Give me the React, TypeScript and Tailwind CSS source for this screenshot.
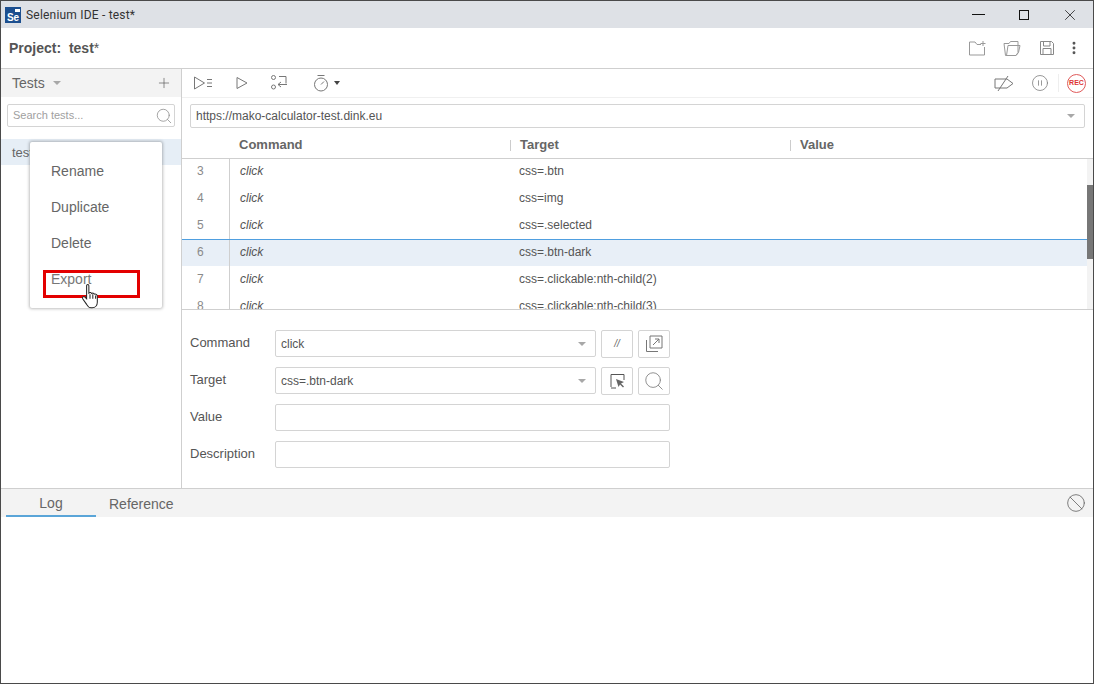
import { Search, Plus, X, EllipsisVertical, Ban, CirclePause } from 'lucide-react'

const rows = [
  { n: 3, target: 'css=.btn' },
  { n: 4, target: 'css=img' },
  { n: 5, target: 'css=.selected' },
  { n: 6, target: 'css=.btn-dark', active: true },
  { n: 7, target: 'css=.clickable:nth-child(2)' },
  { n: 8, target: 'css=.clickable:nth-child(3)' },
]

function Caret({ className = '' }: { className?: string }) {
  return <span className={`inline-block h-0 w-0 border-x-[4px] border-t-[4px] border-x-transparent border-t-[#a8a8a8] ${className}`} />
}

function Ico({ children, w = 22, h = 22, className = '' }: { children: React.ReactNode; w?: number; h?: number; className?: string }) {
  return (
    <svg width={w} height={h} viewBox={`0 0 ${w} ${h}`} fill="none" stroke="#777" strokeWidth="1" className={className}>
      {children}
    </svg>
  )
}

function Field({ label, value, caret, children }: { label: string; value?: string; caret?: boolean; children?: React.ReactNode }) {
  return (
    <div className="flex h-[27px] items-center">
      <span className="w-[85px] pb-[2px] text-[13px] text-[#555]">{label}</span>
      <div className="flex h-[27px] flex-1 items-center justify-between rounded-[2px] border border-[#d4d4d4] bg-white pl-[5px] pr-[9px] text-[12px] text-[#555]">
        <span>{value}</span>
        {caret && <Caret />}
      </div>
      {children}
    </div>
  )
}

function IconButton({ children }: { children: React.ReactNode }) {
  return (
    <div className="ml-[5px] flex h-[28px] w-[32px] items-center justify-center rounded-[2px] border border-[#d4d4d4] bg-white">
      {children}
    </div>
  )
}

export default function App() {
  return (
    <div className="relative flex h-[684px] w-[1094px] flex-col overflow-hidden border-x border-y border-[#4a4a4a] bg-white font-['Liberation_Sans',sans-serif] text-[#555]">
      <div className="flex h-[27px] shrink-0 items-center bg-[#dee1e6] pl-[4px]">
        <div className="relative flex h-[16px] w-[16px] items-end justify-center bg-[#1c4f8f] text-[10px] font-bold leading-[11px] text-white">
          Se
          <span className="absolute right-[1px] top-[2px] h-[3px] w-[5px] bg-white" />
        </div>
        <span className="ml-[5px] font-['Roboto',sans-serif] text-[12px] tracking-[0.2px] text-[#333]">Selenium IDE - test*</span>
        <div className="ml-auto flex items-center text-[#111]">
          <span className="flex w-[46px] justify-center"><span className="h-[1px] w-[13px] bg-[#111]" /></span>
          <span className="flex w-[46px] justify-center"><span className="h-[10px] w-[10px] border border-[#111]" /></span>
          <span className="flex w-[46px] justify-center"><X size={18} strokeWidth={1} /></span>
        </div>
      </div>

      <div className="flex h-[41px] shrink-0 items-center border-b border-[#cfcfcf] pl-[8px] pr-[11px]">
        <span className="text-[14px] font-bold text-[#555]">Project:&nbsp; test<span className="font-normal">*</span></span>
        <div className="ml-auto flex items-center">
          <Ico w={20} h={18}>
            <path d="M8 3H2.500v13h15V8M8 3l2 2.500h4M16 2v5M13.500 4.500h5" stroke="#999" />
          </Ico>
          <Ico w={20} h={18} className="ml-[15px]">
            <path d="M2 4.500h5l1.500-2H16v11l-2 3H3.500zM4.500 16.500L6 6.500h12l-1.500 7-2.500 3" stroke="#999" />
          </Ico>
          <Ico w={18} h={18} className="ml-[16px]">
            <path d="M2.500 2.500h11l2 2v11h-13zM5.500 2.500v4.500h6.500V2.500M5 15.500v-6h8v6" stroke="#888" />
          </Ico>
          <EllipsisVertical size={16} color="#555" strokeWidth={2.4} className="ml-[10px]" />
        </div>
      </div>

      <div className="flex h-[420px] shrink-0 border-b border-[#cfcfcf]">
        <aside className="w-[181px] shrink-0 border-r border-[#cfcfcf]">
          <div className="flex h-[28px] items-center bg-[#f3f3f3] pl-[11px] pr-[9px]">
            <span className="text-[14px] text-[#666]">Tests</span>
            <Caret className="ml-[8px]" />
            <Plus size={16} strokeWidth={1} color="#555" className="ml-auto" />
          </div>
          <div className="mt-[7px] px-[6px]">
            <div className="flex h-[23px] items-center justify-between rounded-[2px] border border-[#d4d4d4] pl-[5px] pr-[1px] text-[11px] text-[#a0a0a0]">
              Search tests...
              <Search size={18} strokeWidth={1} color="#888" />
            </div>
          </div>
          <div className="mt-[12px] flex h-[26px] items-center bg-[#e6eef6] pl-[11px] pt-[1px] text-[13px] text-[#666]">test</div>
        </aside>

        <main className="flex min-w-0 flex-1 flex-col">
          <div className="flex h-[29px] shrink-0 items-center border-b border-[#f0f0f0] pl-[11px] pr-[7px]">
            <Ico w={20} h={16}>
              <path d="M1.500 2l10 6-10 6z M14 4.500h5M14 8h5M14 11.500h5" />
            </Ico>
            <Ico w={14} h={16} className="ml-[22px]">
              <path d="M2 2.500l10 5.500-10 5.500z" />
            </Ico>
            <Ico w={18} h={18} className="ml-[21px]">
              <circle cx="3.500" cy="3.500" r="2" />
              <circle cx="3.500" cy="13" r="2" />
              <path d="M9 2.500h7v7M17 10.500H8M11 8l-3 2.500 3 2.500" />
            </Ico>
            <Ico w={16} h={18} className="ml-[25px]">
              <circle cx="8" cy="10.500" r="6.500" />
              <path d="M4.500 1.500h7M8 10.500l3-3" />
            </Ico>
            <span className="ml-[5px] inline-block h-0 w-0 border-x-[3px] border-t-[4px] border-x-transparent border-t-[#444]" />
            <div className="ml-auto flex items-center">
              <Ico w={20} h={18}>
                <path d="M1 5h12l6 4.500-6 4.500H1zM4 17L14 2" />
              </Ico>
              <CirclePause size={18} strokeWidth={1} color="#777" className="ml-[17px]" />
              <div className="ml-[9px] h-[18px] border-l border-[#eee]" />
              <div className="ml-[8px] flex h-[19px] w-[19px] items-center justify-center rounded-full border border-[#e05a5a] text-[7px] font-bold text-[#d33]">REC</div>
            </div>
          </div>

          <div className="shrink-0 px-[8px] pt-[6px]">
            <div className="flex h-[24px] items-center justify-between rounded-[2px] border border-[#d4d4d4] pb-[1px] pl-[5px] pr-[9px] text-[12px] text-[#555]">
              https://mako-calculator-test.dink.eu
              <Caret />
            </div>
          </div>

          <div className="flex h-[31px] shrink-0 items-center border-b border-[#cfcfcf] pt-[4px] text-[13px] font-bold text-[#666] [&>span]:font-semibold">
            <span className="ml-[57px] w-[271px]">Command</span>
            <span className="h-[11px] border-l border-[#ccc]" />
            <span className="ml-[9px] w-[270px]">Target</span>
            <span className="h-[11px] border-l border-[#ccc]" />
            <span className="ml-[9px]">Value</span>
          </div>

          <div className="relative h-[151px] shrink-0 overflow-hidden border-b border-[#cfcfcf]">
            <div className="-mt-[1px]">
              {rows.map((r) => (
                <div
                  key={r.n}
                  className={`flex h-[27px] items-center text-[12px] text-[#555] ${r.active ? 'border-t border-[#4f9fe0] bg-[#e8eff7] [&>span]:pb-[2px]' : '[&>span]:pb-[1px]'}`}
                >
                  <span className="flex h-full w-[48px] items-center border-r border-[#cfcfcf] pl-[15px] text-[#8a8a8a]">{r.n}</span>
                  <span className="ml-[10px] w-[279px] italic">click</span>
                  <span>{r.target}</span>
                </div>
              ))}
            </div>
            <div className="absolute bottom-0 right-0 top-0 w-[6px] bg-[#f3f3f3]">
              <div className="mt-[26px] h-[74px] bg-[#777]" />
            </div>
          </div>

          <div className="flex w-[488px] flex-col gap-[10px] pl-[8px] pt-[20px]">
            <Field label="Command" value="click" caret>
              <IconButton><span className="text-[10px] italic text-[#666]">//</span></IconButton>
              <IconButton>
                <Ico w={20} h={20}>
                  <path d="M6 2h12v12H6zM2.500 6v11.500H14M9 11l6-6M11 5h4v4" />
                </Ico>
              </IconButton>
            </Field>
            <Field label="Target" value="css=.btn-dark" caret>
              <IconButton>
                <Ico w={18} h={18}>
                  <path d="M3 15V2.500h13V8M3 16h5" stroke="#555" />
                  <path d="M8 7l8 3-3 1.500 3 3-1 1-3-3L10.500 15z" fill="#666" stroke="none" />
                </Ico>
              </IconButton>
              <IconButton><Search size={22} strokeWidth={1} color="#888" /></IconButton>
            </Field>
            <Field label="Value" />
            <Field label="Description" />
          </div>
        </main>
      </div>

      <div className="flex h-[28px] shrink-0 items-center bg-[#f3f3f3] pl-[5px] pr-[7px] text-[14px] text-[#666]">
        <span className="flex h-full w-[90px] items-center justify-center border-b-2 border-[#5aa5d8] pt-[2px]">Log</span>
        <span className="ml-[13px] pt-[2px]">Reference</span>
        <Ban size={20} strokeWidth={1} color="#666" className="ml-auto" />
      </div>

      <div className="absolute left-[29px] top-[141px] flex h-[166px] w-[132px] flex-col rounded-[2px] bg-white pl-[21px] pt-[11px] text-[14px] text-[#666] shadow-[0_0_3px_1px_rgba(0,0,0,0.25)]">
        <span className="h-[36px] leading-[36px]">Rename</span>
        <span className="h-[36px] leading-[36px]">Duplicate</span>
        <span className="h-[36px] leading-[36px]">Delete</span>
        <span className="h-[36px] leading-[36px] text-[#777]">Export</span>
      </div>
      <div className="absolute left-[42px] top-[269px] h-[28px] w-[97px] border-[3px] border-[#e30000]" />
      <svg width="18" height="27" viewBox="0 0 16 24" className="absolute left-[80px] top-[282px]" fill="#fff" stroke="#222" strokeWidth="0.9">
        <path d="M5 2.500c0-1.500 2-1.500 2 0V9c1-1 2-.5 2.500.3 1-.6 2-.3 2.500.6 1-.3 2.500.3 2.500 2V17c0 3-2 5-4.500 5H9c-2 0-3-1-4-3L1.500 14c-.7-1.500 1-2.500 2-1.500L5 14z" />
        <path d="M8 10v4M10.500 10v4M13 11v3" />
      </svg>
    </div>
  )
}
